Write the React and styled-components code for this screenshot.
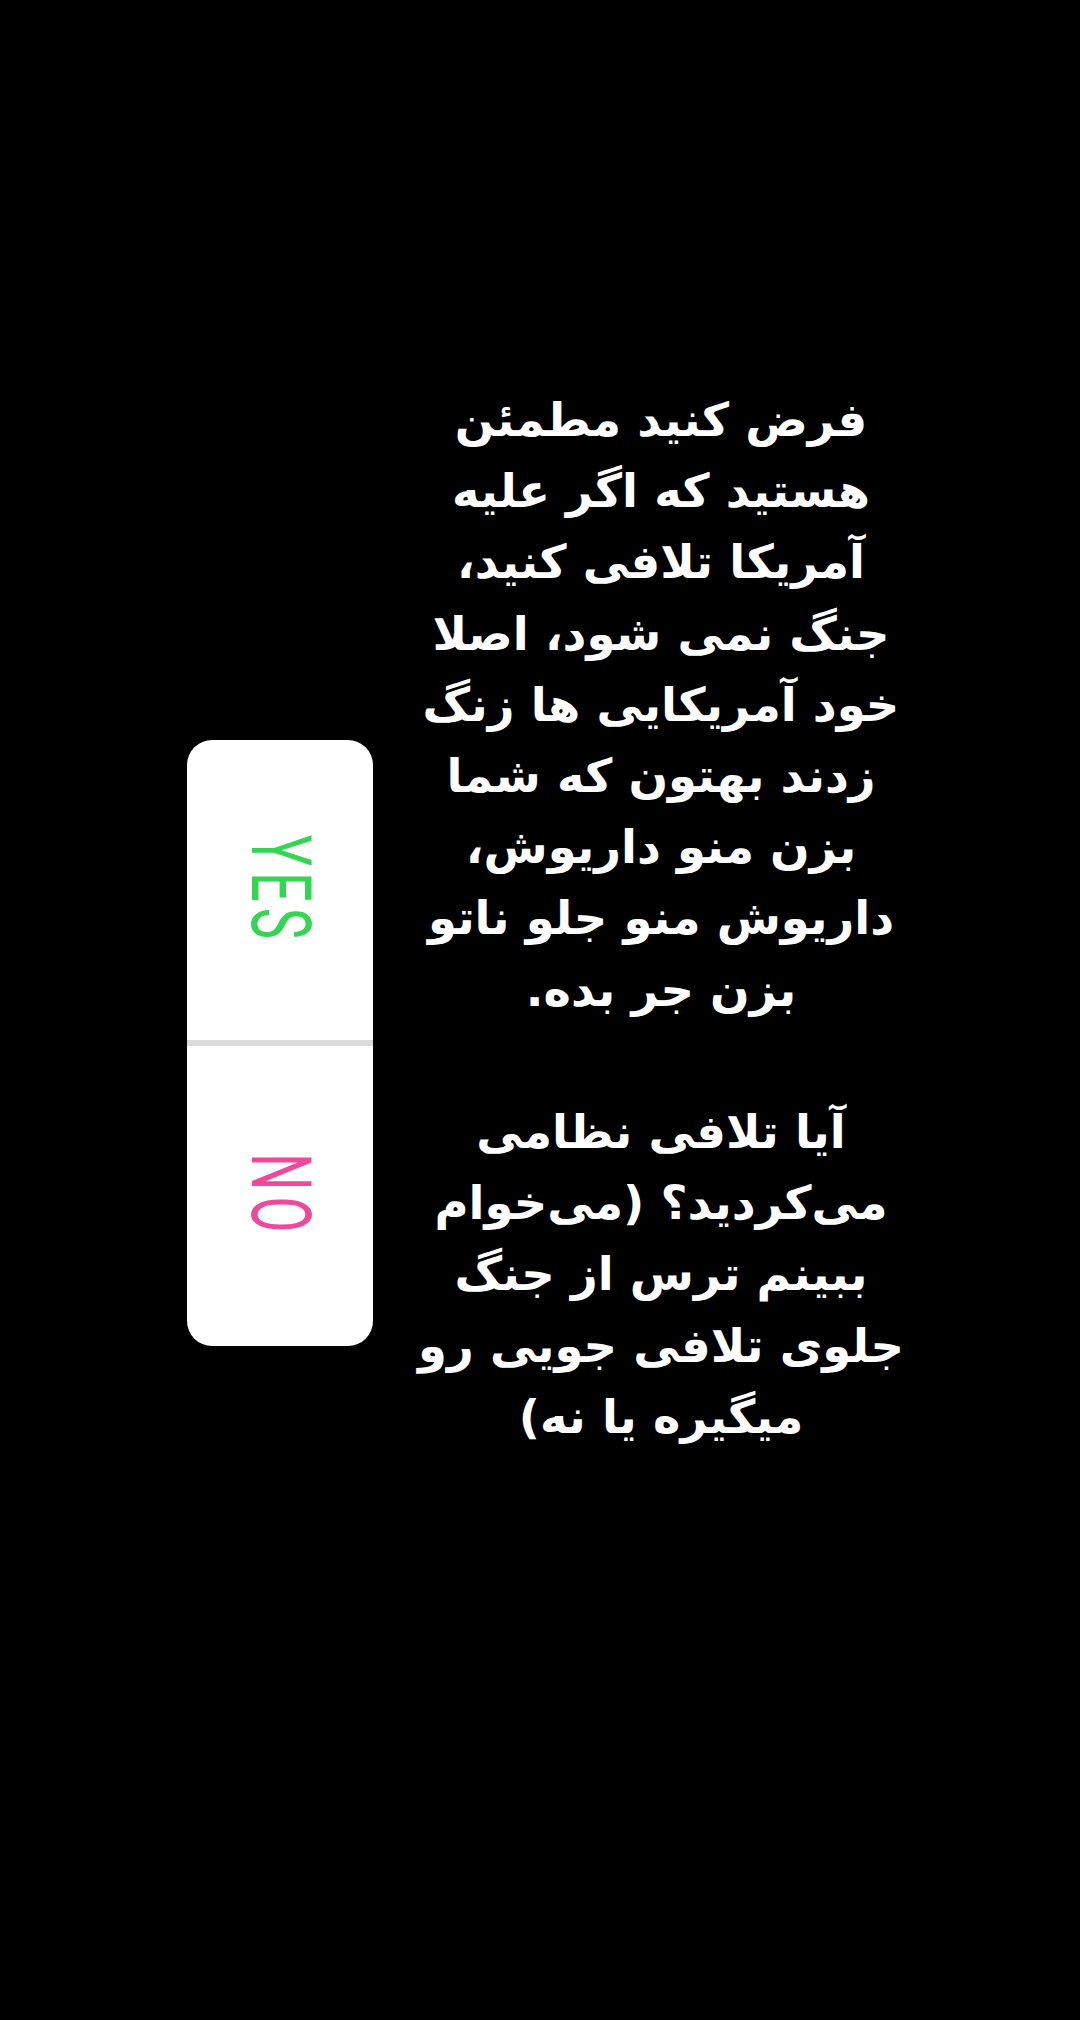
import React from 'react'
import styled, { createGlobalStyle } from 'styled-components'

const GlobalStyle = createGlobalStyle`
  html, body {
    margin: 0;
    padding: 0;
    background: #000;
  }
  #root {
    min-height: 2020px;
    background: #000;
  }
`

const Stage = styled.div`
  display: flex;
  align-items: flex-start;
  gap: 37px;
  padding-left: 187px;
  min-height: 2020px;
  background: #000;
`

const PollCard = styled.div`
  margin-top: 740px;
  width: 186px;
  display: flex;
  flex-direction: column;
  background: #fff;
  border-radius: 25px;
  overflow: hidden;
`

const Option = styled.div`
  height: 300px;
  display: flex;
  align-items: center;
  justify-content: center;
`

const Divider = styled.div`
  height: 6px;
  background: #dcdcdc;
`

const Label = styled.span`
  writing-mode: vertical-rl;
  font-family: Roboto, "Liberation Sans", sans-serif;
  font-weight: 400;
  font-size: 84px;
  line-height: 1;
  letter-spacing: 10px;
  color: ${p => p.color};
  transform: scaleY(0.62);
`

const Caption = styled.div`
  margin-top: 385px;
  width: 502px;
  direction: rtl;
  text-align: center;
  font-family: "DejaVu Sans", sans-serif;
  font-weight: 700;
  font-size: 46.5px;
  line-height: 71.2px;
  color: #fff;
`

const Paragraph = styled.div`
  & + & {
    margin-top: 71.2px;
  }
`

const Line = styled.div`
  white-space: nowrap;
`

const first = [
  'فرض کنید مطمئن',
  'هستید که اگر علیه',
  'آمریکا تلافی کنید،',
  'جنگ نمی شود، اصلا',
  'خود آمریکایی ها زنگ',
  'زدند بهتون که شما',
  'بزن منو داریوش،',
  'داریوش منو جلو ناتو',
  'بزن جر بده.',
]

const second = [
  'آیا تلافی  نظامی',
  'می\u200cکردید؟ (می\u200cخوام',
  'ببینم ترس از جنگ',
  'جلوی تلافی جویی رو',
  'میگیره یا نه)',
]

function App() {
  return (
    <>
      <GlobalStyle />
      <Stage>
        <PollCard>
          <Option>
            <Label color="#33d552">YES</Label>
          </Option>
          <Divider />
          <Option>
            <Label color="#f0489c">NO</Label>
          </Option>
        </PollCard>
        <Caption>
          <Paragraph>
            {first.map(t => <Line key={t}>{t}</Line>)}
          </Paragraph>
          <Paragraph>
            {second.map(t => <Line key={t}>{t}</Line>)}
          </Paragraph>
        </Caption>
      </Stage>
    </>
  )
}

export default App
